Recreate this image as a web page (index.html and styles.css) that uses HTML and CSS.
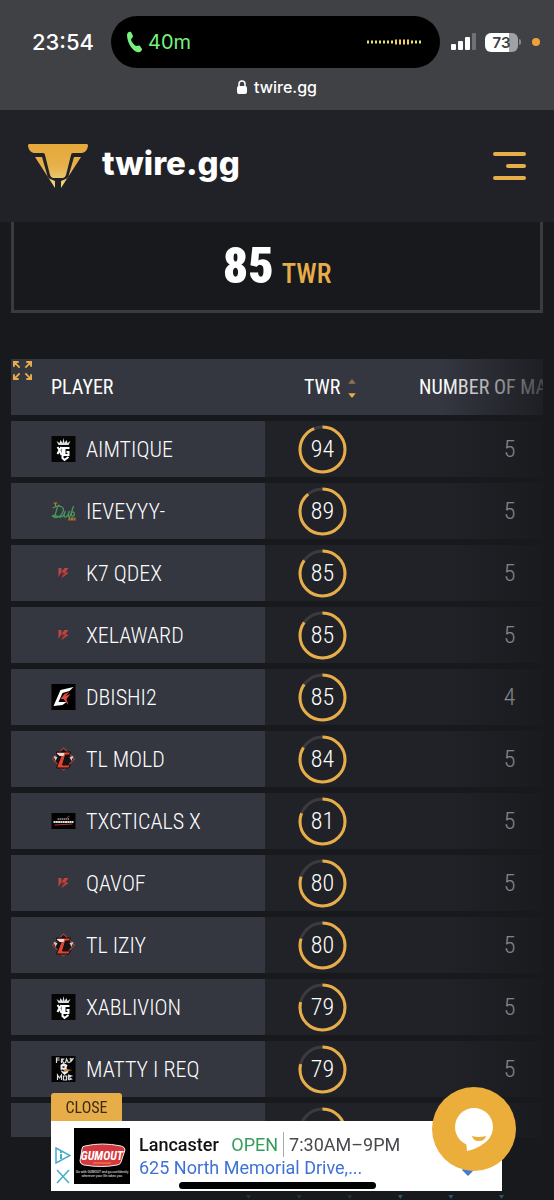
FILE: index.html
```html
<!DOCTYPE html>
<html lang="en">
<head>
    <meta charset="UTF-8">
    <meta name="viewport" content="width=device-width, initial-scale=1.0">
    <title>twire.gg</title>
    <link rel="stylesheet" href="styles.css">
</head>
<body>
    <!-- team logos -->
    <svg class="sprite" aria-hidden="true">
        <symbol id="xg" viewBox="0 0 24 26">
            <rect width="24" height="26" fill="#050606"/>
            <path d="M7 9L5 5l3 2 1-3 2 3 1-5 1 5 2-3 1 3 3-2-2 4z" fill="#ddd"/>
            <path d="M6 11l2 3-2 4M10 11l-2 3 2 5" stroke="#fff" stroke-width="2" fill="none"/>
            <path d="M18 12h-5v7h4v-3h-2M11 11v11l2 2 4-3" stroke="#fff" stroke-width="2" fill="none"/>
        </symbol>
        <symbol id="dub" viewBox="0 0 24 26">
            <path d="M2 5h4M4 5v3M6 8l2-1" stroke="#b1803a" stroke-width="1.2"/>
            <path d="M6 9L3 19M1 10c8-4 13-1 10 5-2 4-7 6-10 3 2-2 5 1 8 1 3 0 4-3 5-6-2 5-2 6 0 6s3-3 4-6c-2 5-1 6 0 6 1-1 3-8 4-11-2 6-3 10-1 10 2 1 3-4 0-4" fill="none" stroke="#46985a" stroke-width="1.300"/>
            <path d="M17 21h7" stroke="#b1762d" stroke-width="3" stroke-dasharray="2 .5"/>
        </symbol>
        <symbol id="k7" viewBox="0 0 24 26">
            <path d="M7 8h3v4l3-4h4l-3 4 3 1-7 5 2-5-2-1-3 5z" fill="#c04440"/>
            <path d="M10 12l4 1-3 3z" fill="#81282c"/>
        </symbol>
        <symbol id="ck" viewBox="0 0 24 26">
            <rect width="24" height="26" fill="#000"/>
            <path d="M22 3L9 6 2 22l9-1 4-3H7l4-9 7-2z" fill="#fff"/>
            <path d="M18 8l-5 2-4 5h3l5 6-2-6 4-5-5 2z" fill="#e4493c"/>
        </symbol>
        <symbol id="tl" viewBox="0 0 24 26">
            <path d="M12 2l11 11-11 11L1 13z" fill="#171314" stroke="#99433d" stroke-width="1.200"/>
            <path d="M2 10l4 1-2 4zM22 10l-4 1 2 4z" fill="#d6c9c5"/>
            <path d="M5 6h14l-1 3h-4l-3 10h8l-2 3H5l5-13H5z" fill="#e0452e" stroke="#120d0d"/>
            <path d="M5 7h8l-1 3H8z" fill="#ddd"/>
        </symbol>
        <symbol id="danger" viewBox="0 0 24 26">
            <rect y="5" width="24" height="16" fill="#020202"/>
            <path d="M6 11h12" stroke="#999" stroke-width="1.500" stroke-dasharray="1.500 .5"/>
            <path d="M2 14h20" stroke="#ddd" stroke-width="2" stroke-dasharray="2 .3"/>
            <path d="M3 17l18-1M15 10l3-2" stroke="#bc3032"/>
        </symbol>
        <symbol id="mob" viewBox="0 0 24 26">
            <rect width="24" height="26" fill="#030303"/>
            <path d="M5 7V2h3M5 4h3M10 7V3h2l-2 2 3 2M14 7l1-4 2 4M18 3h2l-2 4M19 2l1 3 2-3M6 24v-5l2 3 2-3v5M12 20h3v4h-3zM17 24v-5l3 1-3 1 3 2-3 1" fill="none" stroke="#ddd" stroke-width="1.200"/>
            <path d="M9 9l3-2 4 2-1 3 2 4-4 3-3-3-1-3z" fill="#eee"/>
            <path d="M11 11h2M10 14l3 1" stroke="#111" stroke-width="1.500"/>
            <path d="M13 13l8 1-8 2z" fill="#c98345"/>
        </symbol>
    </svg>

    <div class="browser-bar">
        <div class="status">
            <time class="clock">23:54</time>
            <div class="island">
                <svg class="phone" viewBox="0 0 16 22"><path d="M1 4C1 1 4 0 5 1l2 4c0 2-2 2-2 4 1 2 3 5 5 6 2 0 3-1 4 0l2 3c0 2-2 4-5 3C5 19 1 10 1 4z" fill="#76f27d"/></svg>
                <span class="call-time">40m</span>
                <svg class="wave" viewBox="0 0 56 8"><path d="M1 4h54" stroke="#e5e66d" stroke-width="3" stroke-dasharray="2 2"/><path d="M29 4h14" stroke="#f2cc67" stroke-width="5" stroke-dasharray="2 2"/></svg>
            </div>
            <svg class="signal" viewBox="0 0 26 18"><g fill="#fff"><rect y="11" width="5" height="6" rx="1"/><rect x="7" y="8" width="5" height="9" rx="1"/><rect x="14" y="4" width="5" height="13" rx="1"/></g><rect x="21" width="4" height="17" rx="1" fill="#707176"/></svg>
            <span class="battery">73</span>
            <span class="battery-tip"></span>
            <span class="mic-dot"></span>
        </div>
        <div class="address">
            <svg class="lock" viewBox="0 0 10 14"><rect y="6" width="10" height="8" rx="2" fill="#fff"/><path d="M2 7V4a3 3 0 016 0v3" fill="none" stroke="#fff" stroke-width="1.500"/></svg>
            <span>twire.gg</span>
        </div>
    </div>

    <header class="site-header">
        <a class="brand" href="#">
            <svg class="logo" viewBox="0 0 60 44">
                <defs><linearGradient id="gold" gradientUnits="userSpaceOnUse" x1="0" y1="0" x2="0" y2="44"><stop offset="0" stop-color="#e6a83a"/><stop offset=".5" stop-color="#e6b04a"/><stop offset="1" stop-color="#f1d78a"/></linearGradient></defs>
                <path d="M1 0h58q1 0 1 2-1 6-6 7H45q-2 0-2 2l-5 20q-1 3-3 3H25q-2 0-3-3l-5-20q0-2-2-2H6Q1 8 0 2q0-2 1-2z" fill="url(#gold)"/>
                <path d="M7 13h7l6 21 7 3v7zM53 13h-7l-6 21-7 3v7z" fill="url(#gold)"/>
            </svg>
            <span class="wordmark">twire.gg</span>
        </a>
        <button class="menu-button" aria-label="Menu"><span></span><span></span><span></span></button>
    </header>

    <main>
        <section class="score-card">
            <strong>85</strong>
            <span>TWR</span>
        </section>

        <div class="table-wrap">
            <button class="expand" aria-label="Full screen">
                <svg viewBox="0 0 20 20"><path d="M1 6V1h5M1 1l6 6M14 1h5v5M19 1l-6 6M1 14v5h5M1 19l6-6M14 19h5v-5M19 19l-6-6" fill="none" stroke="#e6ad49" stroke-width="2"/></svg>
            </button>
            <table>
                <thead>
                    <tr>
                        <th class="player">Player</th>
                        <th class="twr">TWR <svg class="sort" viewBox="0 0 8 20"><path d="M0 5l4-5 4 5z" fill="#8c7450"/><path d="M0 15l4 5 4-5z" fill="#e6ad49"/></svg></th>
                        <th class="matches">Number of matches</th>
                    </tr>
                </thead>
                <tbody id="rows"></tbody>
            </table>
        </div>
    </main>

    <div class="markers"><i></i><i></i><i></i><i></i><i></i><i></i></div>

    <aside class="ad">
        <button class="ad-close">CLOSE</button>
        <div class="ad-body">
            <div class="ad-choices">
                <svg viewBox="0 0 16 17"><path d="M1 1l14 7.500-14 7.500z" fill="none" stroke="#45adc7" stroke-width="1.500"/><path d="M6 7v5M6 4v2" stroke="#45adc7" stroke-width="2"/></svg>
                <svg viewBox="0 0 16 17"><path d="M2 2l12 13M14 2L2 15" stroke="#45adc7" stroke-width="1.500"/></svg>
            </div>
            <svg class="ad-image" viewBox="0 0 56 56">
                <rect width="56" height="56" fill="#000"/>
                <path d="M11 18q17-4 36 0 4 1 4 4l-4 12q-1 3-4 3-15 3-33 0-4-1-4-4l2-12q0-3 3-3z" fill="#d5373c" stroke="#eee"/>
                <text class="ad-logo" x="28" y="32" text-anchor="middle">GUMOUT</text>
                <path d="M19 35h18" stroke="#ef983c"/>
                <text class="ad-small" x="28" y="45" text-anchor="middle">Go with GUMOUT and go confidently</text>
                <text class="ad-small" x="28" y="49" text-anchor="middle">wherever your life takes you</text>
            </svg>
            <div class="ad-text">
                <p><b>Lancaster</b> <span class="open">OPEN</span><span class="hours">7:30AM–9PM</span></p>
                <a href="#">625 North Memorial Drive,...</a>
            </div>
            <svg class="ad-arrow" viewBox="0 0 12 12"><path d="M6 0l6 6-6 6-6-6z" fill="#4579d4"/></svg>
        </div>
    </aside>

    <button class="chat" aria-label="Chat">
        <svg viewBox="0 0 40 44"><circle cx="20" cy="20" r="19" fill="#fff"/><path d="M12 34l1 10q15-3 23-14z" fill="#fff"/><path d="M18 29q7 2 14 0-1 5-7 5t-7-5z" fill="#ebae3b"/></svg>
    </button>
    <div class="home-bar"></div>

    <script src="script.js"></script>
</body>
</html>
```
FILE: styles.css
```css
* {
    box-sizing: border-box;
}
body {
    margin: 0;
    height: 100vh;
    overflow: hidden;
    background: #18191d;
    color: #fff;
    font-family: "Roboto Condensed", Roboto, sans-serif;
}
button {
    padding: 0;
    border: 0;
    background: none;
    cursor: pointer;
    font-family: inherit;
}
a {
    color: inherit;
    text-decoration: none;
}
svg {
    display: block;
    flex: none;
}
.sprite {
    position: absolute;
    width: 0;
    height: 0;
}

/* phone status bar */
.browser-bar {
    height: 110px;
    padding-top: 16px;
    background: #404145;
    font-family: Inter, sans-serif;
}
.status {
    display: flex;
    align-items: center;
    padding: 0 14px 0 32px;
}
.clock {
    width: 79px;
    font-size: 22px;
    font-weight: 500;
}
.island {
    display: flex;
    flex: 1;
    align-items: center;
    height: 52px;
    margin-right: 11px;
    padding: 0 18px 0 15px;
    border-radius: 26px;
    background: #000;
}
.phone {
    width: 16px;
    height: 22px;
}
.call-time {
    flex: 1;
    margin-left: 6px;
    color: #76f27d;
    font-size: 20px;
}
.wave {
    width: 56px;
    height: 8px;
}
.signal {
    width: 26px;
    height: 18px;
}
.battery {
    width: 33px;
    height: 19px;
    margin-left: 8px;
    border-radius: 6px;
    background: linear-gradient(90deg, #fff 73%, #a0a1a5 73%);
    color: #404145;
    font-size: 15px;
    font-weight: 600;
    line-height: 19px;
    text-align: center;
}
.battery-tip {
    width: 2px;
    height: 6px;
    margin: 0 11px 0 1px;
    border-radius: 0 2px 2px 0;
    background: #85868a;
}
.mic-dot {
    width: 8px;
    height: 8px;
    border-radius: 50%;
    background: #eda03b;
}
.address {
    display: flex;
    justify-content: center;
    align-items: center;
    gap: 7px;
    margin-top: 9px;
    font-size: 16px;
    font-weight: 500;
    line-height: 20px;
}
.lock {
    width: 10px;
    height: 14px;
}

/* site header */
.site-header {
    display: flex;
    align-items: center;
    justify-content: space-between;
    height: 112px;
    padding: 0 28px;
    background: #212227;
}
.brand {
    display: flex;
    gap: 14px;
}
.logo {
    width: 60px;
    height: 44px;
}
.wordmark {
    font-family: Inter, sans-serif;
    font-size: 33px;
    font-weight: 800;
    line-height: 38px;
}
.menu-button {
    display: flex;
    flex-direction: column;
    align-items: flex-end;
    gap: 8px;
}
.menu-button span {
    width: 33px;
    height: 4px;
    border-radius: 2px;
    background: #e6ad49;
}
.menu-button span:nth-child(2) {
    width: 20px;
}

main {
    padding: 0 11px;
}
.score-card {
    display: flex;
    justify-content: center;
    align-items: baseline;
    gap: 8px;
    height: 91px;
    padding-top: 14px;
    border: 3px solid #3a3b40;
    border-top: 0;
    font-weight: bold;
}
.score-card strong {
    font-size: 50px;
    line-height: 60px;
}
.score-card span {
    color: #e6ad49;
    font-size: 27px;
    font-weight: 500;
}

/* player table */
.table-wrap {
    position: relative;
    height: calc(100vh - 416px);
    margin-top: 40px;
    overflow: hidden;
}
.table-wrap::after {
    content: "";
    position: absolute;
    inset: 0 0 0 auto;
    width: 100px;
    background: linear-gradient(90deg, rgba(24, 25, 29, 0), rgba(24, 25, 29, .8));
}
.expand {
    position: absolute;
    top: 8px;
    left: 2px;
}
.expand svg {
    width: 19px;
    height: 19px;
}
table {
    width: 100%;
    min-width: 630px;
    table-layout: fixed;
    border-spacing: 0 6px;
}
th, td {
    height: 56px;
    padding: 0;
    background: #212227;
    font-size: 24px;
    font-weight: 300;
    text-align: left;
}
th {
    background: #343640;
    font-size: 20px;
    font-weight: normal;
    text-transform: uppercase;
}
.player {
    width: 254px;
    padding-left: 40px;
    background: #343640;
}
.twr {
    width: 115px;
    padding-left: 33px;
}
th.twr {
    padding-left: 39px;
}
.matches {
    padding-right: 2px;
    text-align: center;
}
td.matches {
    color: #fff;
}
.name {
    display: flex;
    align-items: center;
    gap: 10px;
    font-size: 22px;
}
.name svg {
    width: 25px;
    height: 26px;
}
.sort {
    display: inline-block;
    width: 8px;
    height: 19px;
    margin-left: 3px;
    vertical-align: middle;
}
.ring {
    display: grid;
    place-items: center;
    width: 49px;
    height: 49px;
}
.ring > * {
    grid-area: 1 / 1;
}
.ring circle {
    fill: none;
    stroke: #3a3a3f;
    stroke-width: 3;
}
.ring .value {
    stroke: #e6ad49;
}

/* overlays */
.ad {
    position: fixed;
    right: 52px;
    bottom: 9px;
    left: 51px;
}
.ad-close {
    display: block;
    width: 71px;
    height: 28px;
    border-radius: 3px 3px 0 0;
    background: #e6ad49;
    color: #3a2a16;
    font-size: 16px;
}
.ad-body {
    display: flex;
    align-items: center;
    height: 70px;
    padding: 0 5px 0 4px;
    background: #fff;
    font-family: Roboto, sans-serif;
    font-size: 18px;
}
.ad-choices {
    display: grid;
    gap: 4px;
    margin: 20px 3px 0 0;
}
.ad-choices svg {
    width: 16px;
    height: 17px;
}
.ad-image {
    width: 56px;
    height: 56px;
}
.ad-logo {
    fill: #fff;
    font: italic bold 12px "Roboto Condensed", sans-serif;
}
.ad-small {
    fill: #ccc;
    font: bold 3px "Liberation Sans", sans-serif;
}
.ad-text {
    flex: 1;
    margin-left: 9px;
    color: #111;
    line-height: 23px;
    white-space: nowrap;
}
.ad-text p {
    margin: 0;
}
.ad-text b {
    font-weight: 500;
}
.ad-text a {
    color: #3f72d8;
}
.open {
    margin: 0 5px 0 8px;
    color: #379b5c;
}
.hours {
    padding: 2px 0 2px 5px;
    border-left: 1px solid #aaa;
    color: #48494c;
}
.ad-arrow {
    width: 12px;
    height: 12px;
    margin: 28px 23px 0 0;
}
.chat {
    position: fixed;
    right: 38px;
    bottom: 29px;
    display: grid;
    place-items: center;
    width: 84px;
    height: 84px;
    border-radius: 50%;
    background: #ebae3b;
}
.chat svg {
    width: 40px;
    height: 44px;
}
.home-bar {
    position: fixed;
    right: 178px;
    bottom: 11px;
    left: 179px;
    height: 7px;
    border-radius: 4px;
    background: #000;
}
.markers {
    position: fixed;
    right: 50px;
    bottom: 1px;
    left: 246px;
    display: flex;
    justify-content: space-between;
}
.markers i {
    width: 5px;
    height: 4px;
    background: #28566a;
    clip-path: polygon(0 0, 100% 0, 50% 100%);
}
.markers i:nth-child(-n+3) {
    opacity: .4;
}
```
FILE: script.js
```javascript
const players = [
    ['xg', 'AIMTIQUE', 94, 5],
    ['dub', 'IEVEYYY-', 89, 5],
    ['k7', 'K7 QDEX', 85, 5],
    ['k7', 'XELAWARD', 85, 5],
    ['ck', 'DBISHI2', 85, 4],
    ['tl', 'TL MOLD', 84, 5],
    ['danger', 'TXCTICALS X', 81, 5],
    ['k7', 'QAVOF', 80, 5],
    ['tl', 'TL IZIY', 80, 5],
    ['xg', 'XABLIVION', 79, 5],
    ['mob', 'MATTY I REQ', 79, 5],
    ['xg', 'TL JOSH W', 78, 5]
];

document.getElementById('rows').innerHTML = players.map(([team, name, twr, matches]) => `
    <tr>
        <td class="player"><div class="name"><svg><use href="#${team}"/></svg>${name}</div></td>
        <td class="twr"><div class="ring">
            <svg width="49" height="49" viewBox="0 0 49 49">
                <circle cx="24.5" cy="24.5" r="22.5"/>
                <circle class="value" cx="24.5" cy="24.5" r="22.5" pathLength="100" stroke-dasharray="${twr} 100" transform="rotate(-90 24.5 24.5)"/>
            </svg>
            <span>${twr}</span>
        </div></td>
        <td class="matches">${matches}</td>
    </tr>`).join('');
```
